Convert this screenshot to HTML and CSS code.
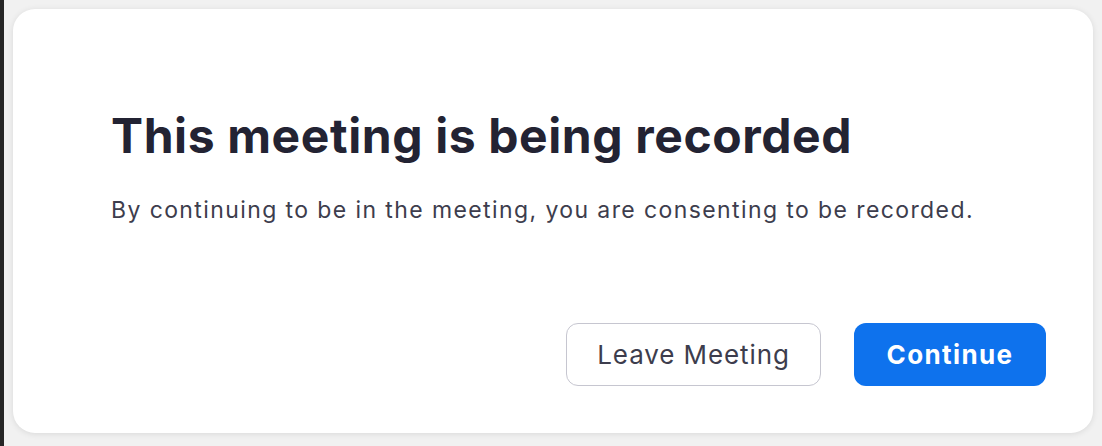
FILE: index.html
```html
<!DOCTYPE html>
<html>
<head>
<meta charset="utf-8">
<link rel="stylesheet" href="styles.css">
</head>
<body>
<div class="strip"></div>
<main class="stage">
  <section class="card">
    <h1 class="title">This meeting is being recorded</h1>
    <p class="desc">By continuing to be in the meeting, you are consenting to be recorded.</p>
    <div class="actions">
      <button class="btn btn-secondary">Leave Meeting</button>
      <button class="btn btn-primary">Continue</button>
    </div>
  </section>
</main>
</body>
</html>
```
FILE: styles.css
```css
html, body {
  margin: 0;
  height: 100%;
}
body {
  display: flex;
  background: #f1f1f1;
  font-family: Inter, "Liberation Sans", sans-serif;
  overflow: hidden;
}
.strip {
  width: 4px;
  background: #262626;
  flex: none;
}
.stage {
  flex: 1;
  display: flex;
  padding: 9px 9px 13px 9px;
}
.card {
  flex: 1;
  background: #ffffff;
  border-radius: 22px;
  box-shadow: 0 1px 6px rgba(0, 0, 0, 0.10);
  padding: 0 47px 0 98px;
  display: flex;
  flex-direction: column;
}
.title {
  margin: 99px 0 0 0;
  font-size: 48px;
  line-height: 56px;
  font-weight: 700;
  color: #232333;
  letter-spacing: 0.6px;
  white-space: nowrap;
}
.desc {
  margin: 32px 0 0 0;
  font-size: 23px;
  line-height: 28px;
  color: #3d3d4d;
  letter-spacing: 1.4px;
  white-space: nowrap;
}
.actions {
  margin-top: auto;
  margin-bottom: 47px;
  display: flex;
  justify-content: flex-end;
  gap: 33px;
}
.btn {
  height: 63px;
  border-radius: 12px;
  font-family: inherit;
  font-size: 26px;
  padding: 0;
  cursor: pointer;
}
.btn-secondary {
  width: 255px;
  background: #ffffff;
  border: 1px solid #c6c6d0;
  color: #3d3d4d;
  letter-spacing: 0.9px;
}
.btn-primary {
  width: 192px;
  background: #0e72ed;
  border: none;
  color: #ffffff;
  font-weight: 700;
  letter-spacing: 1.4px;
}
```
